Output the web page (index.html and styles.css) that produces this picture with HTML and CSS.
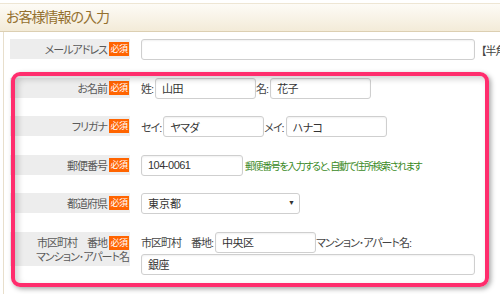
FILE: index.html
```html
<!DOCTYPE html>
<html lang="ja">
<head>
    <meta charset="UTF-8">
    <title>お客様情報の入力</title>
    <link rel="stylesheet" href="styles.css">
</head>
<body>
    <div class="page">
        <h2 class="title">お客様情報の入力</h2>
        <div class="form">
            <div class="row">
                <div class="label">メールアドレス<span class="req">必須</span></div>
                <div class="field">
                    <input class="text mail" type="text">
                    <span class="hint">【半角英数字】</span>
                </div>
            </div>
            <div class="row">
                <div class="label">お名前<span class="req">必須</span></div>
                <div class="field">
                    <span class="cap">姓:</span><input class="text" type="text" value="山田">
                    <span class="cap">名:</span><input class="text" type="text" value="花子">
                </div>
            </div>
            <div class="row">
                <div class="label">フリガナ<span class="req">必須</span></div>
                <div class="field">
                    <span class="cap">セイ:</span><input class="text" type="text" value="ヤマダ">
                    <span class="cap">メイ:</span><input class="text" type="text" value="ハナコ">
                </div>
            </div>
            <div class="row">
                <div class="label">郵便番号<span class="req">必須</span></div>
                <div class="field">
                    <input class="text zip" type="text" value="104-0061">
                    <span class="note">郵便番号を入力すると、自動で住所検索されます</span>
                </div>
            </div>
            <div class="row">
                <div class="label">都道府県<span class="req">必須</span></div>
                <div class="field">
                    <span class="select-wrap">
                        <select class="select"><option>東京都</option></select>
                    </span>
                </div>
            </div>
            <div class="row">
                <div class="label tall">
                    <span class="line">市区町村　番地<span class="req">必須</span></span>
                    <span class="line">マンション･アパート名</span>
                </div>
                <div class="field stack">
                    <div class="line-fields">
                        <span class="cap">市区町村　番地:</span><input class="text" type="text" value="中央区">
                        <span class="cap">マンション･アパート名:</span>
                    </div>
                    <input class="text mail" type="text" value="銀座">
                </div>
            </div>
        </div>
        <div class="highlight"></div>
    </div>
</body>
</html>
```

FILE: styles.css
```css
body { margin: 0; background: #fff; overflow: hidden; font-family: "Liberation Sans", "Noto Sans CJK JP", sans-serif; font-feature-settings: "palt"; }
.page { position: relative; width: 640px; }
.title { margin: 3px 0 0; height: 27px; border-top: 1px solid #eee6d4; border-bottom: 1px solid #dccfb2; background: linear-gradient(#fdfbf6, #f3ebd8); padding-left: 6px; font-size: 14px; font-weight: normal; line-height: 27px; letter-spacing: -1px; color: #94702f; }
.form { margin-left: 3px; border-left: 1px solid #e8dfcc; padding: 7px 0 20px 6px; display: flex; flex-direction: column; gap: 17.6px; }
.row { display: flex; align-items: flex-start; gap: 11px; }
.label { width: 120px; height: 20px; box-sizing: border-box; padding-right: 1px; background: #ededed; display: flex; justify-content: flex-end; align-items: center; font-size: 11px; letter-spacing: -1px; color: #5a5a5a; }
.label.tall { height: 34px; padding-top: 4px; flex-direction: column; align-items: flex-end; justify-content: flex-start; }
.label .line { display: flex; align-items: center; height: 14px; line-height: 14px; }
.req { width: 20px; height: 14px; margin-left: 2px; background: #ff6400; color: #fff; font-size: 9px; line-height: 14px; letter-spacing: -0.5px; text-align: center; }
.field { display: flex; align-items: center; height: 21px; font-size: 11px; letter-spacing: -1px; color: #444; }
.field.stack { flex-direction: column; align-items: flex-start; height: auto; gap: 1px; }
.line-fields { display: flex; align-items: center; }
.cap { margin-right: 2px; }
.text { width: 101px; height: 21px; box-sizing: border-box; margin: 0; padding: 0 6px; border: 1px solid #cfcfcf; border-radius: 3px; box-shadow: inset 0 1px 2px rgba(0, 0, 0, 0.06); font-family: inherit; font-feature-settings: "palt"; font-size: 11px; letter-spacing: -0.5px; color: #333; }
.text.mail { width: 334px; }
.text.zip { width: 102px; }
.hint { margin-left: 6px; }
.note { margin-left: 2px; font-size: 10px; letter-spacing: -1.4px; color: #3a8a1e; }
.select-wrap { position: relative; display: inline-block; }
.select-wrap::after { content: "▼"; position: absolute; right: 6px; top: 6px; font-size: 7px; color: #333; pointer-events: none; }
.select { width: 159px; height: 21px; margin: 0; padding: 0 6px; appearance: none; -webkit-appearance: none; background: #fff; border: 1px solid #cfcfcf; border-radius: 3px; font-family: inherit; font-size: 11px; color: #333; }
.highlight { position: absolute; left: 11px; top: 69px; width: 478px; height: 215px; box-sizing: border-box; border: 4px solid #ff2d6d; border-radius: 9px; box-shadow: 2px 2px 5px rgba(0, 0, 0, 0.35), inset 3px 3px 6px rgba(0, 0, 0, 0.18); pointer-events: none; }
```
